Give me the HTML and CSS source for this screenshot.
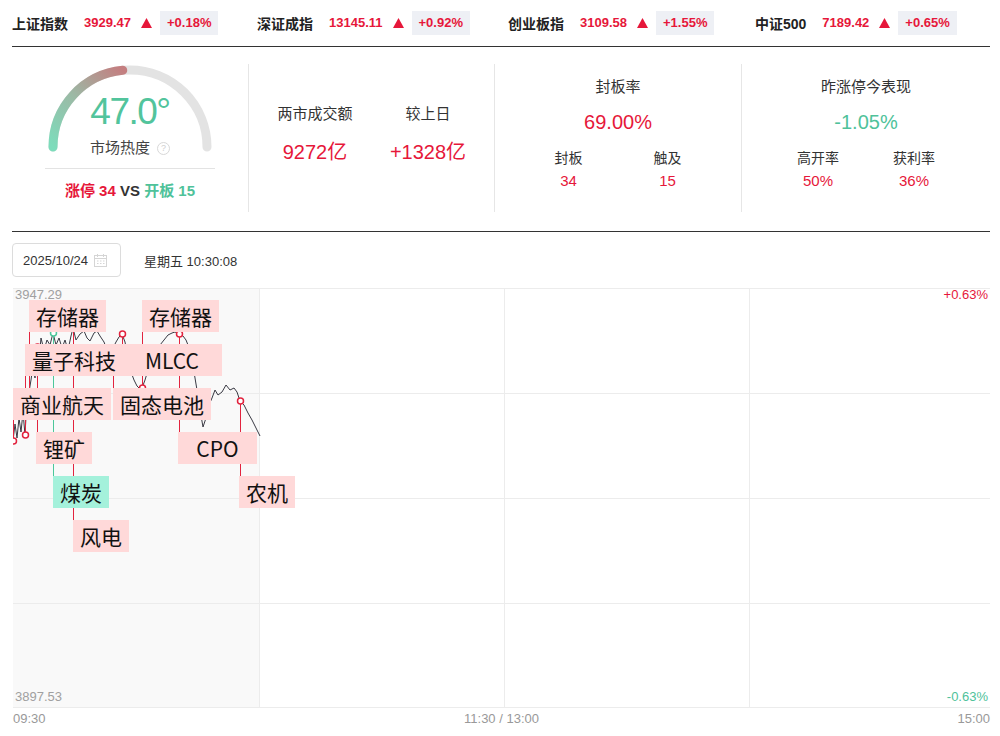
FILE: index.html
```html
<!DOCTYPE html>
<html lang="zh-CN">
<head>
<meta charset="utf-8">
<title>市场情绪</title>
<link rel="stylesheet" href="styles.css">
</head>
<body>
<div class="page">
  <div class="ticker">
    <div class="tick"><span class="tick-name">上证指数</span><span class="tick-val">3929.47</span><svg class="tick-arrow" width="11" height="10" viewBox="0 0 11 10"><polygon points="5.5,0 11,10 0,10" fill="#e6173a"/></svg><span class="tick-pct">+0.18%</span></div>
    <div class="tick"><span class="tick-name">深证成指</span><span class="tick-val">13145.11</span><svg class="tick-arrow" width="11" height="10" viewBox="0 0 11 10"><polygon points="5.5,0 11,10 0,10" fill="#e6173a"/></svg><span class="tick-pct">+0.92%</span></div>
    <div class="tick"><span class="tick-name">创业板指</span><span class="tick-val">3109.58</span><svg class="tick-arrow" width="11" height="10" viewBox="0 0 11 10"><polygon points="5.5,0 11,10 0,10" fill="#e6173a"/></svg><span class="tick-pct">+1.55%</span></div>
    <div class="tick"><span class="tick-name">中证500</span><span class="tick-val">7189.42</span><svg class="tick-arrow" width="11" height="10" viewBox="0 0 11 10"><polygon points="5.5,0 11,10 0,10" fill="#e6173a"/></svg><span class="tick-pct">+0.65%</span></div>
  </div>

  <div class="stats">
    <div class="panel heat">
      <div class="gauge">
        <svg class="gauge-arc" width="170" height="94" viewBox="0 0 170 94">
          <defs>
            <linearGradient id="hg" gradientUnits="userSpaceOnUse" x1="8" y1="83" x2="78" y2="6">
              <stop offset="0" stop-color="#7ddcbb"/>
              <stop offset="0.5" stop-color="#9cb9a5"/>
              <stop offset="1" stop-color="#c47e80"/>
            </linearGradient>
          </defs>
          <path d="M 8 83 A 77 77 0 0 1 162 83" fill="none" stroke="#e3e3e3" stroke-width="9" stroke-linecap="round"/>
          <path d="M 8 83 A 77 77 0 0 1 77.75 6.34" fill="none" stroke="url(#hg)" stroke-width="9" stroke-linecap="round"/>
        </svg>
        <div class="gauge-val">47.0°</div>
        <div class="gauge-label"><span>市场热度</span><span class="help">?</span></div>
      </div>
      <div class="gauge-rule"></div>
      <div class="limit"><span class="up">涨停 34</span> VS <span class="down">开板 15</span></div>
    </div>

    <div class="panel turnover">
      <div class="col">
        <div class="t-label">两市成交额</div>
        <div class="t-val up">9272亿</div>
      </div>
      <div class="col">
        <div class="t-label">较上日</div>
        <div class="t-val up">+1328亿</div>
      </div>
    </div>

    <div class="panel rate">
      <div class="r-title">封板率</div>
      <div class="r-val up">69.00%</div>
      <div class="r-sub">
        <div class="r-col"><div class="s-label">封板</div><div class="s-val up">34</div></div>
        <div class="r-col"><div class="s-label">触及</div><div class="s-val up">15</div></div>
      </div>
    </div>

    <div class="panel rate wide">
      <div class="r-title">昨涨停今表现</div>
      <div class="r-val down">-1.05%</div>
      <div class="r-sub">
        <div class="r-col"><div class="s-label">高开率</div><div class="s-val up">50%</div></div>
        <div class="r-col"><div class="s-label">获利率</div><div class="s-val up">36%</div></div>
      </div>
    </div>
  </div>

  <div class="toolbar">
    <div class="date"><span>2025/10/24</span>
      <svg width="13" height="13" viewBox="0 0 13 13"><rect x="0.5" y="1.5" width="12" height="11" fill="none" stroke="#d5d5d5"/><line x1="0.5" y1="4.5" x2="12.5" y2="4.5" stroke="#d5d5d5"/><line x1="3.5" y1="0" x2="3.5" y2="3" stroke="#d5d5d5"/><line x1="9.5" y1="0" x2="9.5" y2="3" stroke="#d5d5d5"/><path d="M3 7h1.5M6 7h1.5M9 7h1.5M3 9.5h1.5M6 9.5h1.5M9 9.5h1.5" stroke="#d5d5d5"/></svg>
    </div>
    <div class="weekday">星期五 10:30:08</div>
  </div>

  <div class="chart">
    <svg class="chart-svg" width="977" height="420" viewBox="13 288 977 420">
      <rect x="13" y="288" width="246" height="420" fill="#f9f9f9"/>
      <g stroke="#ececec" stroke-width="1">
        <line x1="13" y1="288.5" x2="990" y2="288.5"/>
        <line x1="13" y1="393.5" x2="990" y2="393.5"/>
        <line x1="13" y1="498.5" x2="990" y2="498.5"/>
        <line x1="13" y1="603.5" x2="990" y2="603.5"/>
        <line x1="13" y1="707.5" x2="990" y2="707.5"/>
        <line x1="259.5" y1="288" x2="259.5" y2="708"/>
        <line x1="504.5" y1="288" x2="504.5" y2="708"/>
        <line x1="749.5" y1="288" x2="749.5" y2="708"/>
      </g>
      <polyline fill="none" stroke="#3a3a44" stroke-width="1" stroke-linejoin="round" points="13,441 15,424 17,438 19,418 21,432 23,412 25,435 27,398 29,392 31,380 33,365 35,378 37,347 39,360 41,338 44,350 47,340 50,345 53,333 56,345 59,338 62,348 65,340 68,350 71,336 73,328 76,340 80,334 84,331 87,338 90,341 94,333 97,331 100,336 104,342 107,350 110,352 113,348 116,342 119,337 122,334 125,342 128,358 131,372 134,380 137,386 140,389 142,388 145,380 148,370 151,360 155,350 160,345 164,340 168,335 172,333 175,332 179,334 183,336 186,340 190,350 194,372 197,390 200,410 203,427 206,418 209,405 212,398 215,390 218,395 222,392 226,385 230,390 234,388 237,392 240,401 244,405 248,413 252,420 256,428 260,436"/>
      <g stroke="#e2243f" stroke-width="1">
        <line x1="29.5" y1="332" x2="29.5" y2="392"/>
        <line x1="25.5" y1="376" x2="25.5" y2="435"/>
        <line x1="13.5" y1="420" x2="13.5" y2="441"/>
        <line x1="37.5" y1="347" x2="37.5" y2="432"/>
        <line x1="73.5" y1="328" x2="73.5" y2="520"/>
        <line x1="122.5" y1="334" x2="122.5" y2="344"/>
        <line x1="113.5" y1="348" x2="113.5" y2="388"/>
        <line x1="142.5" y1="332" x2="142.5" y2="388"/>
        <line x1="179.5" y1="334" x2="179.5" y2="432"/>
        <line x1="240.5" y1="401" x2="240.5" y2="476"/>
      </g>
      <line x1="53.5" y1="333" x2="53.5" y2="476" stroke="#4cc79a" stroke-width="1"/>
      <g fill="#fff" stroke="#e2243f" stroke-width="1.5">
        <circle cx="13.5" cy="441" r="3"/>
        <circle cx="25.5" cy="435" r="3"/>
        <circle cx="29.5" cy="392" r="3"/>
        <circle cx="37.5" cy="347" r="3"/>
        <circle cx="73.5" cy="328" r="3"/>
        <circle cx="113.5" cy="348" r="3"/>
        <circle cx="122.5" cy="334" r="3"/>
        <circle cx="142.5" cy="388" r="3"/>
        <circle cx="179.5" cy="334" r="3"/>
        <circle cx="240.5" cy="401" r="3"/>
      </g>
      <circle cx="53.5" cy="333" r="3" fill="#fff" stroke="#4cc79a" stroke-width="1.5"/>
    </svg>

    <div class="tag" style="left:16px;top:12px">存储器</div>
    <div class="tag" style="left:129px;top:12px">存储器</div>
    <div class="tag" style="left:12px;top:56px">量子科技</div>
    <div class="tag w4" style="left:109px;top:56px">MLCC</div>
    <div class="tag" style="left:0px;top:100px">商业航天</div>
    <div class="tag" style="left:100px;top:100px">固态电池</div>
    <div class="tag" style="left:23px;top:144px">锂矿</div>
    <div class="tag w3" style="left:165px;top:144px">CPO</div>
    <div class="tag green" style="left:40px;top:188px">煤炭</div>
    <div class="tag" style="left:226px;top:188px">农机</div>
    <div class="tag" style="left:60px;top:232px">风电</div>

    <span class="y-label tl">3947.29</span>
    <span class="y-label bl">3897.53</span>
    <span class="y-label tr up">+0.63%</span>
    <span class="y-label br down">-0.63%</span>
  </div>

  <div class="axis">
    <span>09:30</span>
    <span>11:30 / 13:00</span>
    <span>15:00</span>
  </div>
</div>
</body>
</html>
```

FILE: styles.css
```css
* { box-sizing: border-box; }

body {
  margin: 0;
  background: #fff;
  color: #333;
  font-family: "Liberation Sans", "Noto Sans CJK SC", sans-serif;
}

.page {
  width: 1000px;
  padding: 0 10px 0 12px;
}

.up { color: #e6173a; }
.down { color: #4fc29a; }

/* ticker */
.ticker {
  display: grid;
  grid-template-columns: 245px 251px 247px 1fr;
  align-items: center;
  height: 47px;
  padding-bottom: 1px;
  border-bottom: 1px solid #333;
}

.tick {
  display: flex;
  align-items: center;
}

.tick-name {
  font-size: 14px;
  font-weight: bold;
  color: #222;
  margin-right: 16px;
}

.tick-val {
  font-size: 13px;
  font-weight: bold;
  color: #e6173a;
  margin-right: 10px;
}

.tick-arrow {
  display: block;
  margin-right: 8px;
}

.tick-pct {
  background: #eef0f5;
  height: 24px;
  line-height: 24px;
  padding: 0 7px;
  font-size: 13px;
  font-weight: bold;
  color: #e6173a;
}

/* stats */
.stats {
  display: grid;
  grid-template-columns: 236px 246px 247px 1fr;
  padding: 17px 0 19px;
  border-bottom: 1px solid #333;
}

.panel {
  height: 148px;
}

.panel + .panel {
  border-left: 1px solid #e6e6e6;
}

.heat {
  display: flex;
  flex-direction: column;
  align-items: center;
}

.gauge {
  position: relative;
  width: 170px;
  height: 94px;
  padding-top: 28px;
  text-align: center;
}

.gauge-arc {
  position: absolute;
  left: 0;
  top: 0;
}

.gauge-val {
  position: relative;
  font-size: 37px;
  line-height: 40px;
  letter-spacing: -1.5px;
  color: #52c49c;
}

.gauge-label {
  position: relative;
  margin-top: 6px;
  display: flex;
  justify-content: center;
  align-items: center;
  gap: 7px;
  font-size: 15px;
  line-height: 20px;
  color: #444;
}

.help {
  width: 13px;
  height: 13px;
  border: 1px solid #d8d8d8;
  border-radius: 50%;
  font-size: 9px;
  line-height: 11px;
  text-align: center;
  color: #cfcfcf;
}

.gauge-rule {
  width: 170px;
  height: 1px;
  margin-top: 10px;
  background: #e3e3e3;
}

.limit {
  margin-top: 12px;
  font-size: 15px;
  font-weight: bold;
  line-height: 20px;
  color: #333;
}

.turnover {
  display: flex;
  justify-content: center;
  padding-top: 40px;
}

.turnover .col {
  width: 113px;
  text-align: center;
}

.t-label {
  font-size: 15px;
  line-height: 20px;
  color: #333;
}

.t-val {
  margin-top: 14px;
  font-size: 20px;
  line-height: 28px;
}

.rate {
  padding-top: 13px;
  text-align: center;
}

.r-title {
  font-size: 15px;
  line-height: 20px;
  color: #333;
}

.r-val {
  margin-top: 11px;
  font-size: 20px;
  line-height: 28px;
}

.r-sub {
  display: flex;
  justify-content: center;
  margin-top: 12px;
}

.r-col {
  width: 99px;
}

.wide .r-col {
  width: 96px;
}

.s-label {
  font-size: 14px;
  line-height: 20px;
  color: #333;
}

.s-val {
  margin-top: 3px;
  font-size: 15px;
  line-height: 20px;
}

/* toolbar */
.toolbar {
  display: flex;
  align-items: center;
  height: 34px;
  margin-top: 11px;
}

.date {
  display: flex;
  align-items: center;
  gap: 6px;
  width: 109px;
  height: 34px;
  padding-left: 10px;
  border: 1px solid #dcdcdc;
  border-radius: 4px;
  font-size: 13px;
  color: #333;
}

.date svg { display: block; }

.weekday {
  margin-left: 23px;
  font-size: 13px;
  color: #333;
}

/* chart */
.chart {
  position: relative;
  width: 977px;
  height: 420px;
  margin-top: 11px;
  margin-left: 1px;
}

.chart-svg {
  position: absolute;
  left: 0;
  top: 0;
}

.tag {
  position: absolute;
  height: 32px;
  padding: 0 7px;
  background: #ffd9d9;
  font-family: "Noto Sans CJK SC", sans-serif;
  font-size: 21px;
  line-height: 32px;
  color: #111;
  white-space: nowrap;
  text-align: center;
}

.tag.green { background: #a4f1db; }
.tag.w3 { width: 79px; }
.tag.w4 { width: 100px; }

.y-label {
  position: absolute;
  font-size: 13px;
  line-height: 14px;
  color: #a0a0a0;
}

.y-label.tl { left: 2px; top: 0; }
.y-label.bl { left: 2px; bottom: 4px; }
.y-label.tr { right: 2px; top: 0; color: #e6173a; }
.y-label.br { right: 2px; bottom: 4px; color: #4fc29a; }

.axis {
  display: flex;
  justify-content: space-between;
  width: 977px;
  margin-left: 1px;
  height: 22px;
  font-size: 13px;
  line-height: 22px;
  color: #999;
}
```
